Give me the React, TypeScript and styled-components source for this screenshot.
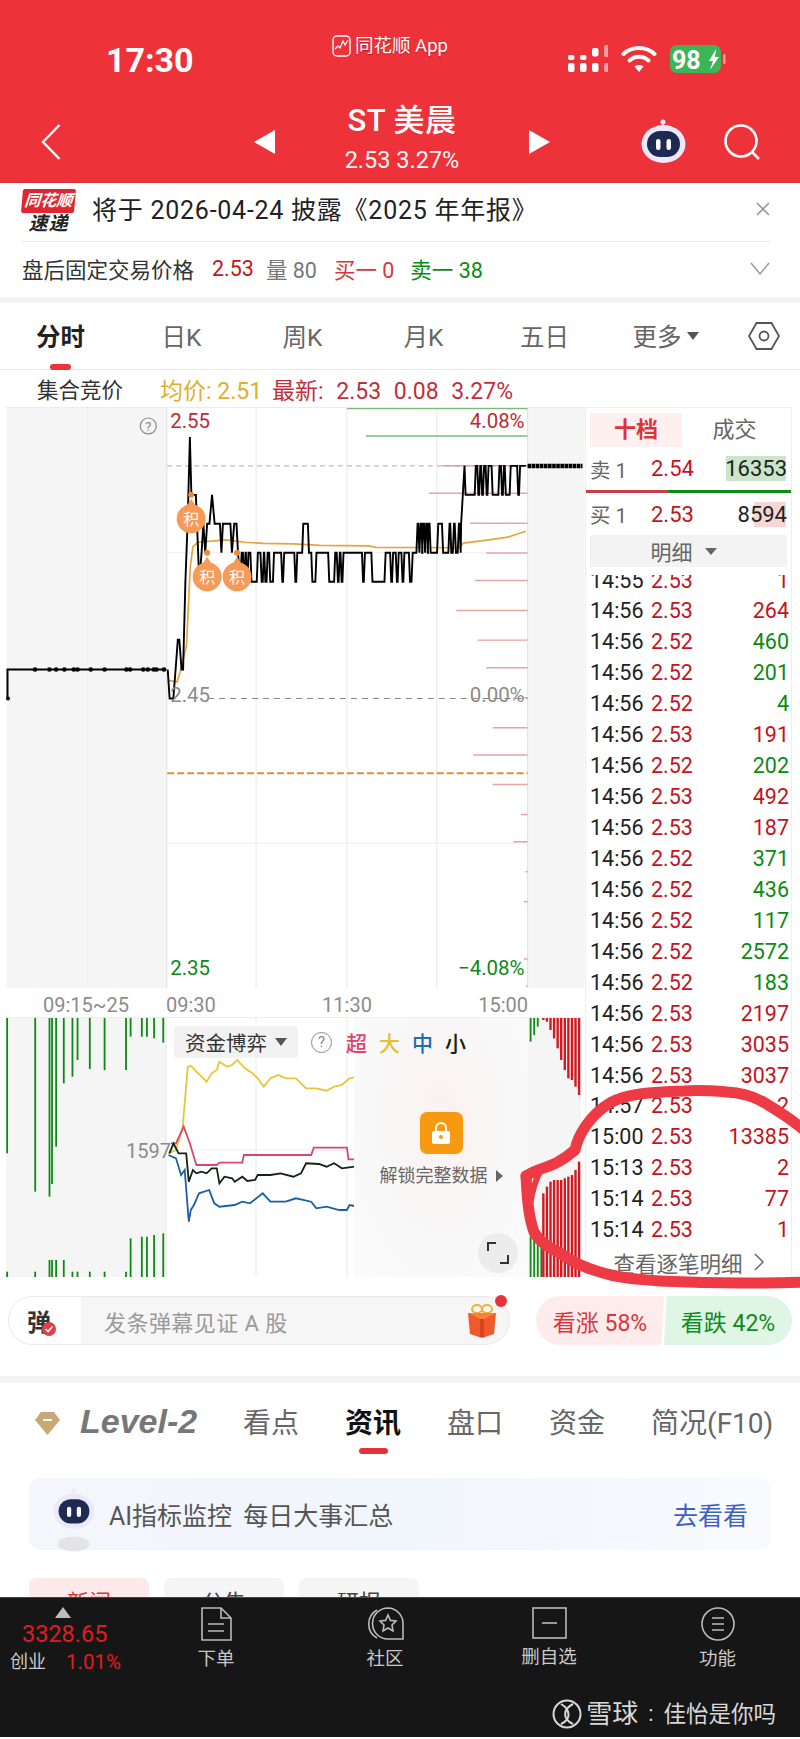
import React from "react";
import styled, { createGlobalStyle } from "styled-components";

const FONT = `Roboto, "Noto Sans CJK SC", sans-serif`;
const RED = "#c3141d";
const GREEN = "#0c8a14";

const Global = createGlobalStyle`
  html, body { margin: 0; padding: 0; background: #fff; }
  body { width: 800px; height: 1739px; overflow: hidden; font-family: ${FONT}; }
  * { box-sizing: border-box; }
`;

const Page = styled.div`
  position: relative; width: 800px; height: 1739px; overflow: hidden;
  display: flex; flex-direction: column; background: #fff;
`;

/* ---------- red header ---------- */
const Header = styled.header`
  height: 183px; background: #ee323a; color: #fff; display: flex; flex-direction: column;
  border-bottom: 1px solid #c9353b;
`;
const StatusBar = styled.div`
  height: 92px; padding: 42px 0 0 106px; display: flex; align-items: flex-start;
`;
const Clock = styled.div`
  font-size: 34px; font-weight: 700; line-height: 36px; width: 226px;
`;
const AppTag = styled.div`
  display: flex; align-items: center; gap: 4px; font-size: 18.5px; line-height: 22px; width: 236px;
  margin-top: -9px; text-shadow: 0 1px 1px rgba(120,0,0,.5);
`;
const StatusIcons = styled.div`
  display: flex; align-items: center; gap: 13px; height: 34px;
`;
const Nav = styled.div`
  flex: 1; display: flex; align-items: center; padding: 0 40px 0 41px; margin-top: 9px;
`;
const BackSlot = styled.div`
  width: 213px; display: flex;
`;
const NavCenter = styled.div`
  width: 296px; display: flex; align-items: center; justify-content: space-between;
`;
const Title = styled.div`
  display: flex; flex-direction: column; align-items: center;
`;
const TitleMain = styled.div`
  font-size: 31px; line-height: 38px; font-weight: 500; margin-top: -8px; letter-spacing: .5px;
`;
const TitleSub = styled.div`
  font-size: 23.5px; line-height: 26px; margin-top: 7px; opacity: .96;
`;
const NavRight = styled.div`
  margin-left: auto; display: flex; align-items: center; gap: 38px;
`;

/* ---------- notice ---------- */
const Notice = styled.section`
  height: 114px; padding: 0 30px 0 22px; display: flex; flex-direction: column;
`;
const NoticeTop = styled.div`
  height: 59px; display: flex; align-items: center; gap: 16px; border-bottom: 1px solid #ececec;
`;
const Brand = styled.div`
  width: 53px; height: 48px; display: flex; flex-direction: column; align-items: center; margin-top: 2px; flex: none;
`;
const BrandRed = styled.div`
  width: 53px; height: 24px; background: #e0272f; color: #fff; font-size: 16px; line-height: 24px; text-align: center;
  font-style: italic; font-weight: 700; transform: skewX(-5deg); white-space: nowrap; border-radius: 2px;
`;
const BrandDark = styled.div`
  font-size: 19px; line-height: 22px; font-style: italic; font-weight: 700; color: #222; letter-spacing: 1px;
`;
const NoticeText = styled.div`
  font-size: 25px; color: #222; flex: 1; white-space: nowrap; letter-spacing: .75px; margin-top: -8px; margin-left: 1px;
`;
const CloseSlot = styled.div`
  display: flex; margin-top: -6px;
`;
const NoticeRow = styled.div`
  flex: 1; display: flex; align-items: center; font-size: 21.5px; padding-bottom: 3px; white-space: nowrap;
`;
const Seg = styled.span<{ $c: string; $ml: number }>`
  color: ${p => p.$c}; margin-left: ${p => p.$ml}px;
`;
const ChevronSlot = styled.div`
  margin-left: auto; display: flex;
`;
const Band = styled.div<{ $h: number }>`
  height: ${p => p.$h}px; background: #f4f4f4; flex: none;
`;

/* ---------- period tabs ---------- */
const PeriodTabs = styled.nav`
  height: 67px; display: flex; align-items: center; border-bottom: 1px solid #e9e9e9; position: relative;
`;
const PeriodTab = styled.div<{ $active?: boolean }>`
  width: 121px; text-align: center; font-size: 24.5px; color: ${p => p.$active ? "#222" : "#666"};
  font-weight: ${p => p.$active ? 700 : 400}; position: relative; display: flex; justify-content: center; align-items: center; gap: 5px;
  height: 100%; padding-bottom: 1px;
  ${p => p.$active ? `&::after { content: ""; position: absolute; left: 50px; width: 21px; bottom: -1px; height: 6px; border-radius: 3px; background: #ee323a; }` : ""}
`;
const MoreCaret = styled.i`
  width: 0; height: 0; border-left: 6px solid transparent; border-right: 6px solid transparent; border-top: 8px solid #555;
`;
const HexSlot = styled.div`
  margin-left: 22px; display: flex;
`;
const InfoRow = styled.div`
  height: 37px; display: flex; align-items: center; padding: 0 0 0 37px; font-size: 23px; white-space: nowrap;
`;
const InfoName = styled.span`
  color: #333; width: 123px; font-size: 21.5px;
`;
const InfoAvg = styled.span`
  color: #dfae2c; width: 112px;
`;
const InfoLast = styled.span`
  color: #c0303a; word-spacing: 7px;
`;

/* ---------- chart zone ---------- */
const ChartZone = styled.section`
  height: 878px; display: flex; padding-left: 6px;
`;
const ChartColumn = styled.div`
  width: 579px; display: flex; flex-direction: column;
`;
const MainSvg = styled.svg`
  display: block; width: 579px; height: 581px; border-top: 1px solid #ececec;
`;
const TimeRow = styled.div`
  height: 30px; display: flex; color: #8b8b8b; font-size: 20px; line-height: 34px; border-bottom: 1px solid #eee;
`;
const TimeAuction = styled.div`
  width: 160px; text-align: center;
`;
const TimeMain = styled.div`
  width: 362px; display: flex; justify-content: space-between;
`;
const SubArea = styled.div`
  position: relative; width: 579px; height: 259px;
`;
const SubSvg = styled.svg`
  display: block; width: 579px; height: 259px;
`;
const SubTools = styled.div`
  position: absolute; left: 168px; top: 8px; display: flex; align-items: center;
`;
const Selector = styled.div`
  width: 124px; height: 32px; background: #f2f2f2; border-radius: 3px; display: flex; align-items: center; justify-content: center; gap: 8px;
  color: #333; font-size: 20.5px; white-space: nowrap;
`;
const LegendItem = styled.span<{ $c: string }>`
  color: ${p => p.$c}; width: 33px; text-align: center; font-size: 21px; font-weight: 500;
`;
const HelpDot = styled.span`
  width: 21px; height: 21px; border: 1.5px solid #8c8c8c; border-radius: 50%; color: #888; font-size: 15px; line-height: 18px; text-align: center;
  margin: 0 8px 0 13px;
`;
const LockPane = styled.div`
  position: absolute; left: 348px; top: 0; width: 174px; height: 259px;
  background: radial-gradient(ellipse at 50% 40%, #fbf1f0 0, #f8f8f8 55%, #fbfbfb 100%);
  display: flex; flex-direction: column; align-items: center; padding-top: 94px;
`;
const LockBox = styled.div`
  width: 43px; height: 42px; border-radius: 7px; background: #f79a12; display: flex; align-items: center; justify-content: center;
`;
const LockText = styled.div`
  margin-top: 10px; font-size: 18px; line-height: 24px; color: #666; display: flex; align-items: center; gap: 8px; white-space: nowrap;
`;
const LockCaret = styled.i`
  width: 0; height: 0; border-top: 6px solid transparent; border-bottom: 6px solid transparent; border-left: 7px solid #666;
`;
const ExpandBtn = styled.div`
  position: absolute; left: 472px; top: 215px; width: 40px; height: 40px; border-radius: 50%; background: #ececec; display: flex; align-items: center; justify-content: center;
`;

/* ---------- right panel ---------- */
const Panel = styled.aside`
  width: 207px; height: 870px; border: 1px solid #eee; border-bottom: none; display: flex; flex-direction: column; overflow: hidden;
`;
const PanelTabs = styled.div`
  display: flex; padding: 5px 4px 0; height: 39px; flex: none;
`;
const PanelTab = styled.div<{ $active?: boolean }>`
  width: ${p => p.$active ? 93 : 106}px; height: 34px; text-align: center; font-size: 22px; line-height: 34px; font-weight: ${p => p.$active ? 700 : 400};
  color: ${p => p.$active ? "#d8353a" : "#666"}; background: ${p => p.$active ? "#fdf0ef" : "transparent"};
`;
const QuoteRow = styled.div<{ $h: number }>`
  height: ${p => p.$h}px; display: flex; align-items: center; padding: 0 4px; font-size: 22px; flex: none;
`;
const QuoteName = styled.span`
  color: #666; width: 61px; white-space: nowrap; font-size: 20.5px;
`;
const QuotePrice = styled.span`
  color: ${RED};
`;
const QuoteVol = styled.span`
  margin-left: auto; position: relative; color: #222; z-index: 0;
`;
const VolBar = styled.i<{ $c: string; $w: number }>`
  position: absolute; right: 1px; top: 0; bottom: 0; width: ${p => p.$w}px; background: ${p => p.$c}; z-index: -1;
`;
const Split = styled.div`
  height: 3px; flex: none; background: linear-gradient(90deg, #c64147 0, #c64147 40%, #0e8a17 40%, #0e8a17 100%);
`;
const DetailHead = styled.div`
  margin: 0 4px; height: 32px; background: #f3f3f3; color: #666; font-size: 21px; display: flex; align-items: center; justify-content: center; gap: 12px; flex: none;
  padding-right: 10px;
`;
const DetailCaret = styled.i`
  width: 0; height: 0; border-left: 6px solid transparent; border-right: 6px solid transparent; border-top: 7px solid #666;
`;
const TradeClip = styled.div`
  margin-top: 8px; height: 668px; overflow: hidden; flex: none;
`;
const TradeList = styled.div`
  margin-top: -10.5px;
`;
const TradeRow = styled.div`
  height: 30.95px; display: grid; grid-template-columns: 61px 60px 1fr; align-items: center; padding: 0 2px 0 4px; font-size: 21.5px; line-height: 31px;
`;
const TradeTime = styled.span`
  color: #222;
`;
const TradeQty = styled.span<{ $up: boolean }>`
  text-align: right; color: ${p => p.$up ? RED : GREEN};
`;
const PanelFoot = styled.div`
  margin-top: 3px; font-size: 21.5px; color: #666; display: flex; align-items: center; justify-content: center; gap: 11px; height: 32px; flex: none; padding: 0 3px;
`;

/* ---------- danmu ---------- */
const DanmuRow = styled.section`
  height: 91px; padding: 11px 8px 0; display: flex; justify-content: space-between; align-items: flex-start; flex: none;
`;
const DanmuBox = styled.div`
  position: relative; width: 502px; height: 49px; border-radius: 25px; border: 1px solid #eaeaea; display: flex; align-items: center; background: #f6f6f6;
`;
const DanmuTag = styled.div`
  width: 72px; height: 47px; background: #fff; border-radius: 24px 0 0 24px; display: flex; align-items: center; padding-left: 18px; font-size: 24px; color: #333; font-weight: 700; position: relative; flex: none;
`;
const Check = styled.svg`
  position: absolute; left: 33px; top: 25px;
`;
const DanmuHint = styled.div`
  margin-left: 23px; font-size: 22px; color: #9a9a9a; flex: 1; letter-spacing: .45px; white-space: nowrap;
`;
const GiftSlot = styled.div`
  margin-right: 12px; display: flex;
`;
const RedDot = styled.i`
  position: absolute; right: 2px; top: -2px; width: 12px; height: 12px; border-radius: 50%; background: #e8323a;
`;
const Sentiment = styled.div`
  width: 256px; height: 49px; display: flex; font-size: 23px; white-space: nowrap;
`;
const SentUp = styled.div`
  flex: 1; background: #fdeceb; color: #d8373d; border-radius: 25px 0 0 25px; display: flex; align-items: center; justify-content: center;
  clip-path: polygon(0 0, 100% 0, 98% 100%, 0 100%);
`;
const SentDown = styled.div`
  flex: 1; background: #dff6e4; color: #0e8a24; border-radius: 0 25px 25px 0; display: flex; align-items: center; justify-content: center;
  clip-path: polygon(2% 0, 100% 0, 100% 100%, 0 100%);
`;

/* ---------- info tabs ---------- */
const InfoZone = styled.section`
  flex: 1; min-height: 0; overflow: hidden; padding: 0 29px;
`;
const InfoTabs = styled.div`
  height: 72px; padding: 4px 0 0 6px; display: flex; align-items: center;
`;
const LevelMark = styled.div`
  display: flex; align-items: center; gap: 20px; width: 208px; flex: none;
`;
const LevelText = styled.span`
  font-size: 34px; font-weight: 700; font-style: italic; color: #777; font-family: "Liberation Sans", sans-serif;
`;
const DiamondSlot = styled.div`
  display: flex; margin-top: 4px;
`;
const InfoTabItem = styled.div<{ $active?: boolean }>`
  position: relative; font-size: 28px; margin-right: 46px; white-space: nowrap; flex: none;
  color: ${p => p.$active ? "#111" : "#666"}; font-weight: ${p => p.$active ? 700 : 400};
  ${p => p.$active ? `&::after { content: ""; position: absolute; left: 14px; width: 29px; top: 47px; height: 6px; border-radius: 3px; background: #e8323a; }` : ""}
`;
const AiBanner = styled.div`
  margin-top: 23px; height: 72px; border-radius: 12px; background: linear-gradient(90deg, #f6f5fc 0, #f1f5fc 50%, #f8fafe 100%);
  display: flex; align-items: center; padding: 0 23px 0 24px; font-size: 25px; color: #555;
`;
const RobotSlot = styled.div`
  display: flex; margin-top: 16px;
`;
const AiText = styled.span`
  margin-left: 14px; word-spacing: 5px; white-space: nowrap;
`;
const AiLink = styled.span`
  margin-left: auto; color: #3f62bd;
`;
const Pills = styled.div`
  margin-top: 28px; display: flex; gap: 15px;
`;
const Pill = styled.div<{ $active?: boolean }>`
  width: 120px; height: 50px; border-radius: 7px; text-align: center; font-size: 22px; line-height: 50px;
  background: ${p => p.$active ? "#fde9e9" : "#f5f5f5"}; color: ${p => p.$active ? "#d8373d" : "#444"};
`;

/* ---------- dark bar ---------- */
const Dock = styled.footer`
  height: 140px; background: #161616; flex: none; margin-bottom: 2px; border-top: 1px solid #444; position: relative;
  display: grid; grid-template-columns: 133px 166px 172px 156px 181px; align-content: start; color: #c9c9c9;
`;
const IndexCell = styled.div`
  padding: 9px 0 0 10px; display: flex; flex-direction: column; align-items: flex-start;
`;
const IndexCaret = styled.i`
  width: 0; height: 0; margin-left: 45px; border-left: 8px solid transparent; border-right: 8px solid transparent; border-bottom: 11px solid #bdbdbd;
`;
const IndexValue = styled.div`
  color: #e21b22; font-size: 23.5px; line-height: 30px; margin: 1px 0 0 12px;
`;
const IndexLine = styled.div`
  display: flex; line-height: 26px; font-size: 18px; gap: 20px;
`;
const IndexPct = styled.span`
  color: #e21b22; font-size: 20.5px;
`;
const DockItem = styled.div`
  display: flex; flex-direction: column; align-items: center; padding-top: 9px; font-size: 18.5px; line-height: 24px; gap: 6px;
`;
const Watermark = styled.div`
  position: absolute; right: 24px; top: 101px; display: flex; align-items: center; color: #d8d8d8; gap: 4px; font-size: 26px; line-height: 30px; white-space: nowrap;
`;
const WmColon = styled.span`
  font-size: 22px; margin: 0 6px;
`;
const WmAuthor = styled.span`
  font-size: 22.5px;
`;
const Scribble = styled.svg`
  position: absolute; left: 0; top: 0; pointer-events: none;
`;

/* ---------- drawings ---------- */
const Robot = ({ s = 45, shadow = false }: { s?: number; shadow?: boolean }) => (
  <svg width={s} height={s * (shadow ? 1.6 : 0.98)} viewBox={shadow ? "0 0 45 72" : "0 0 45 44"}>
    {shadow && <ellipse cx="22" cy="60" rx="17" ry="8" fill="#ddd" opacity=".7" />}
    <circle cx="22" cy="3" r="2.5" fill="#f0e8ff" />
    <path d="M22 5 v4" stroke="#f0e8ff" strokeWidth="2" />
    <ellipse cx="22.5" cy="25" rx="22" ry="19" fill="#ece8fb" />
    <rect x="6" y="12" width="33" height="26" rx="13" fill="#1d2a52" />
    <rect x="15" y="20" width="4.5" height="11" rx="2.2" fill="#fff" />
    <rect x="25.5" y="20" width="4.5" height="11" rx="2.2" fill="#fff" />
  </svg>
);

const Signal = () => (
  <svg width="40" height="28" viewBox="0 0 40 28">
    {[[0,10],[12,10],[24,3],[36,0]].map(([x, y], i) => (
      <React.Fragment key={x}>
        <rect x={x} y={y} width="6.5" height={10 - (i === 3 ? -2 : y / 2)} rx="2" fill={i === 3 ? "#f79aa0" : "#fff"} />
        <rect x={x} y="18" width="6.5" height="9" rx="2" fill={i === 3 ? "#f79aa0" : "#fff"} />
      </React.Fragment>
    ))}
  </svg>
);
const Wifi = () => (
  <svg width="36" height="28" viewBox="0 0 36 28" fill="none" stroke="#fff" strokeWidth="4" strokeLinecap="round">
    <path d="M2.5 9 C11 1 25 1 33.5 9" />
    <path d="M8.5 15.5 C14 10.5 22 10.5 27.5 15.5" />
    <path d="M18 27 L13.5 21.5 C16 19.5 20 19.5 22.5 21.5 Z" fill="#fff" stroke="none" />
  </svg>
);
const Battery = () => (
  <svg width="56" height="28" viewBox="0 0 56 28">
    <rect x="0" y="0" width="51" height="28" rx="7" fill="#3cb558" />
    <rect x="53" y="9" width="2.5" height="10" rx="1.2" fill="#f79aa0" />
    <text x="2" y="23.5" fontSize="25" fontWeight="700" fill="#fff" fontFamily="Roboto, sans-serif">98</text>
    <path d="M46 4 L39 16 H43 L40 25 L49 12 H45 Z" fill="#fff" />
  </svg>
);

const L = [436, 465, 494, 523, 552, 581, 610, 639, 669, 698];
const X = (z: number) => z / 2.657;
const Y = (z: number) => 400 + z / 2.53;
type R = [number, number, number?];
const trace = (base: number, alt: number, ranges: R[]) => {
  const out: [number, number][] = [];
  ranges.forEach(([a, b, o]) => {
    out.push([a - 3, L[base]], [a, L[o ?? alt]], [b, L[o ?? alt]], [b + 3, L[base]]);
  });
  return out;
};
const headPts: [number, number][] = (
  [[445,8],[450,9],[460,9],[466,8],[472,7],[476,7],[482,8],[486,8],[492,5],[498,3],[504,0],[508,2],[520,2],[529,5],[535,4],[540,3],[545,4],[550,3],[556,3],[563,2],[570,3],[584,3],[588,4],[592,3],[612,3],[616,4],[622,3],[628,3],[632,4],[638,5],[642,4]] as [number, number][]
).map(([x, l]) => [x, L[l]]);
const pricePts: [number, number][] = [
  ...headPts,
  ...trace(4, 5, [[648,649],[656,657],[668,682],[695,698],[705,708],[718,725],[750,752],[785,787],[806,818,3],[830,838],[875,888],[898,900],[908,910],[965,967],[990,1022],[1040,1042],[1055,1057],[1070,1072],[1090,1094]]),
  ...trace(4, 3, [[1110,1112],[1118,1120],[1125,1127],[1133,1135],[1140,1142],[1165,1175],[1195,1197],[1207,1209],[1220,1222]]),
  [1226, L[3]],
  ...trace(1, 2, [[1238,1262],[1272,1274],[1282,1284],[1294,1296],[1310,1325],[1335,1337],[1345,1355],[1378,1380]]),
  [1398, L[1]],
];
const priceLine = pricePts.map(([x, y]) => `${X(x).toFixed(1)},${y}`).join(" ");
const zPoly = (a: number[][]) => a.map(([x, y]) => `${X(x).toFixed(1)},${Y(y).toFixed(1)}`).join(" ");
const avgLine = zPoly([[445,708],[470,712],[480,680],[495,620],[505,420],[512,370],[525,358],[560,355],[600,352],[650,358],[700,361],[780,362],[850,366],[980,367],[1000,371],[1220,372],[1232,360],[1300,352],[1350,345],[1398,330]]);
const sellBars = [[164,1175],[234,1140],[310,1250],[385,1293],[455,1263],[531,1213],[606,1270],[676,1293],[752,1390],[828,1310],[897,1258],[972,1310],[1048,1385],[1117,1365],[1193,1397],[1269,1393],[1414,1393],[1483,1398]];
const autoDots = [92,130,148,170,195,205,240,277,335,345,380,392,408,415,435];
const badges = [[191, 518, 494], [207, 576, 552], [237, 576, 552]];

const MainChart = () => (
  <MainSvg viewBox="6 407 579 581">
    <rect x="6" y="407" width="160" height="581" fill="#f5f5f5" />
    <rect x="528" y="407" width="57" height="581" fill="#f5f5f5" />
    {[87, 256, 347, 437].map(x => <line key={x} x1={x} x2={x} y1="407" y2="988" stroke={x === 87 ? "#f0f0f0" : "#e8e8e8"} strokeWidth="1" />)}
    <line x1="166.5" x2="166.5" y1="407" y2="988" stroke="#ddd" />
    <line x1="528" x2="528" y1="407" y2="988" stroke="#e2e2e2" />
    {[552, 843].map(y => <line key={y} x1="166" x2="528" y1={y} y2={y} stroke="#eee" />)}
    <line x1="347" x2="528" y1="407.5" y2="407.5" stroke="#7cbb7c" strokeWidth="1.5" />
    <line x1="366" x2="528" y1="435" y2="435" stroke="#7cbb7c" strokeWidth="1.5" />
    {sellBars.map(([y, x]) => <line key={y} x1={X(x)} x2="528" y1={Y(y)} y2={Y(y)} stroke="#e7a3a5" strokeWidth="1.5" />)}
    <line x1="167" x2="528" y1="465" y2="465" stroke="#bfa39a" strokeDasharray="5 4" />
    <line x1="208" x2="528" y1="698" y2="698" stroke="#888" strokeWidth="1.2" strokeDasharray="6 5" />
    <line x1="167" x2="528" y1="773" y2="773" stroke="#e08e36" strokeWidth="2" strokeDasharray="7 3" />
    <polyline points={avgLine} fill="none" stroke="#e7a43c" strokeWidth="1.7" />
    <polyline points={priceLine} fill="none" stroke="#000" strokeWidth="1.9" strokeLinejoin="miter" />
    <polyline points="7,698 7,669 166,669" fill="none" stroke="#000" strokeWidth="2" />
    <circle cx="7.5" cy="698" r="2" fill="#000" />
    {autoDots.map(z => <circle key={z} cx={X(z)} cy="669" r="2.3" fill="#000" />)}
    <line x1="528" x2="583" y1="465" y2="465" stroke="#000" strokeWidth="4.5" strokeDasharray="3.6 0.5" />
    <g fontFamily={FONT} fontSize="20.5">
      <text x="170" y="427" fill="#bf2a33">2.55</text>
      <text x="525" y="427" fill="#bf2a33" textAnchor="end">4.08%</text>
      <text x="170" y="702" fill="#8b8b8b">2.45</text>
      <text x="525" y="702" fill="#8b8b8b" textAnchor="end">0.00%</text>
      <text x="170" y="975" fill={GREEN}>2.35</text>
      <text x="525" y="975" fill={GREEN} textAnchor="end">−4.08%</text>
    </g>
    <circle cx="148" cy="425" r="8" fill="none" stroke="#888" strokeWidth="1.2" />
    <text x="148" y="430" fontSize="13" fill="#888" textAnchor="middle" fontFamily={FONT}>?</text>
    {badges.map(([x, y, d]) => (
      <g key={x}>
        <circle cx={x} cy={d} r="3" fill="#f0892f" />
        <path d={`M${x} ${d + 4} L${x - 5} ${y - 12} H${x + 5} Z`} fill="#f59a57" />
        <circle cx={x} cy={y} r="14.5" fill="#f59a57" />
        <text x={x} y={y + 6} fontSize="16" fill="#fff" opacity=".95" textAnchor="middle" fontFamily={FONT}>积</text>
      </g>
    ))}
  </MainSvg>
);

const SX = (z: number) => z / 1.96;
const SY = (z: number) => 980 + z / 3;
const sPoly = (a: number[][]) => a.map(([x, y]) => `${SX(x).toFixed(1)},${SY(y).toFixed(1)}`).join(" ");
const greenTop = [[14,520],[69,635],[97,650],[102,612],[110,500],[125,310],[142,290],[152,240],[176,267],[205,270],[247,270],[256,170],[278,170],[288,170],[302,175],[320,188]];
const greenBottom = [[14,875],[69,875],[97,840],[102,840],[110,840],[125,840],[142,875],[152,875],[176,875],[205,875],[247,875],[256,775],[278,770],[288,770],[302,765],[320,760]];
const rightTop = [[1065,120],[1072,125],[1079,150],[1086,175],[1093,205],[1100,240],[1107,270],[1114,295],[1121,300],[1128,320],[1135,345]];
const rightBottom = [[1065,640],[1072,620],[1079,605],[1086,600],[1093,600],[1100,600],[1107,595],[1114,590],[1121,585],[1128,570],[1135,545]];

const SubChart = () => (
  <SubSvg viewBox="6 1018 579 259">
    <rect x="6" y="1018" width="160" height="259" fill="#f5f5f5" />
    <rect x="528" y="1018" width="53" height="259" fill="#f5f5f5" />
    {[256, 347, 437, 166].map(x => <line key={x} x1={x} x2={x} y1="1018" y2="1277" stroke="#e8e8e8" />)}
    <line x1="166" x2="528" y1="1150" y2="1150" stroke="#eee" />
    <g stroke="#0c8a14" strokeWidth="1.8">
      {greenTop.map(([x, y]) => <line key={x} x1={SX(x)} x2={SX(x)} y1="1018" y2={SY(y)} />)}
      {greenBottom.map(([x, y]) => <line key={x} x1={SX(x)} x2={SX(x)} y1="1277" y2={SY(y)} />)}
      <line x1={SX(1040)} x2={SX(1040)} y1="1018" y2={SY(185)} />
      <line x1={SX(1047)} x2={SX(1047)} y1="1018" y2={SY(165)} />
      <line x1={SX(1054)} x2={SX(1054)} y1="1018" y2={SY(140)} />
      {[1040, 1047, 1054, 1061].map(x => <line key={x} x1={SX(x)} x2={SX(x)} y1="1277" y2={SY(770)} />)}
    </g>
    <g stroke="#d01a22" strokeWidth="2.4">
      {rightTop.map(([x, y]) => <line key={x} x1={SX(x)} x2={SX(x)} y1="1018" y2={SY(y)} />)}
      {rightBottom.map(([x, y]) => <line key={x} x1={SX(x)} x2={SX(x)} y1="1277" y2={SY(y)} />)}
    </g>
    <g fill="none" strokeWidth="1.8">
      <polyline stroke="#e5c63a" points={sPoly([[330,520],[345,510],[358,440],[368,260],[375,258],[385,275],[395,290],[405,305],[415,280],[425,270],[430,245],[445,260],[455,255],[465,240],[480,265],[495,280],[505,295],[517,320],[530,295],[545,285],[560,295],[580,295],[600,325],[620,325],[640,332],[655,320],[670,315],[685,295],[695,292]])} />
      <polyline stroke="#d8486a" points={sPoly([[335,490],[345,490],[360,440],[372,490],[385,555],[425,555],[430,548],[475,548],[478,525],[610,525],[615,503],[680,503],[683,538],[695,538]])} />
      <polyline stroke="#1a5ea8" points={sPoly([[330,525],[345,535],[355,585],[362,570],[370,725],[374,690],[380,675],[390,640],[410,630],[420,670],[430,680],[460,675],[475,665],[490,670],[515,640],[530,665],[560,665],[580,655],[610,665],[620,685],[640,680],[665,690],[680,690],[685,675],[695,678]])} />
      <polyline stroke="#10240f" points={sPoly([[332,520],[340,490],[350,520],[365,520],[370,605],[378,570],[385,580],[395,575],[405,580],[415,565],[425,565],[430,610],[440,590],[455,595],[460,605],[475,590],[485,603],[500,600],[505,585],[530,585],[550,580],[575,590],[590,580],[600,550],[625,552],[640,560],[655,550],[670,565],[695,560]])} />
    </g>
    <text x="126" y="1158" fontSize="20" fill="#8b8b8b" fontFamily={FONT}>1597</text>
  </SubSvg>
);

type T = [string, string, string, boolean];
const trades: T[] = [
  ["14:55","2.53","1",true],["14:56","2.53","264",true],["14:56","2.52","460",false],["14:56","2.52","201",false],
  ["14:56","2.52","4",false],["14:56","2.53","191",true],["14:56","2.52","202",false],["14:56","2.53","492",true],
  ["14:56","2.53","187",true],["14:56","2.52","371",false],["14:56","2.52","436",false],["14:56","2.52","117",false],
  ["14:56","2.52","2572",false],["14:56","2.52","183",false],["14:56","2.53","2197",true],["14:56","2.53","3035",true],
  ["14:56","2.53","3037",true],["14:57","2.53","2",true],["15:00","2.53","13385",true],["15:13","2.53","2",true],
  ["15:14","2.53","77",true],["15:14","2.53","1",true],
];

export default function App() {
  return (
    <Page>
      <Global />
      <Header>
        <StatusBar>
          <Clock>17:30</Clock>
          <AppTag>
            <svg width="19" height="26" viewBox="0 0 19 26">
              <rect x="1" y="3" width="17" height="20" rx="4" fill="none" stroke="#fff" strokeWidth="1.4" />
              <path d="M3 16 L6 13 L8 15 L11 8 L13 12 L16 7" stroke="#fff" strokeWidth="1.2" fill="none" />
            </svg>
            同花顺 App
          </AppTag>
          <StatusIcons>
            <Signal />
            <Wifi />
            <Battery />
          </StatusIcons>
        </StatusBar>
        <Nav>
          <BackSlot>
            <svg width="20" height="36" viewBox="0 0 20 36" fill="none" stroke="#fff" strokeWidth="2.4"><path d="M18.5 1 L2 18 L18.5 35" /></svg>
          </BackSlot>
          <NavCenter>
            <svg width="22" height="24" viewBox="0 0 22 24"><path d="M21 0 V24 L0 12 Z" fill="#fff" /></svg>
            <Title>
              <TitleMain>ST 美晨</TitleMain>
              <TitleSub>2.53 3.27%</TitleSub>
            </Title>
            <svg width="22" height="24" viewBox="0 0 22 24"><path d="M1 0 V24 L22 12 Z" fill="#fff" /></svg>
          </NavCenter>
          <NavRight>
            <Robot />
            <svg width="36" height="36" viewBox="0 0 36 36" fill="none" stroke="#fff" strokeWidth="2.6"><circle cx="17" cy="17" r="15.5" /><path d="M28 28 L35 35" /></svg>
          </NavRight>
        </Nav>
      </Header>

      <Notice>
        <NoticeTop>
          <Brand>
            <BrandRed>同花顺</BrandRed>
            <BrandDark>速递</BrandDark>
          </Brand>
          <NoticeText>将于 2026-04-24 披露《2025 年年报》</NoticeText>
          <CloseSlot>
            <svg width="14" height="14" viewBox="0 0 14 14" stroke="#999" strokeWidth="1.6"><path d="M1 1 L13 13 M13 1 L1 13" /></svg>
          </CloseSlot>
        </NoticeTop>
        <NoticeRow>
          <Seg $c="#333" $ml={0}>盘后固定交易价格</Seg>
          <Seg $c={RED} $ml={18}>2.53</Seg>
          <Seg $c="#777" $ml={12}>量 80</Seg>
          <Seg $c="#d8373d" $ml={17}>买一 0</Seg>
          <Seg $c={GREEN} $ml={16}>卖一 38</Seg>
          <ChevronSlot>
            <svg width="20" height="13" viewBox="0 0 20 13" fill="none" stroke="#999" strokeWidth="1.4"><path d="M1 1 L10 12 L19 1" /></svg>
          </ChevronSlot>
        </NoticeRow>
      </Notice>
      <Band $h={6} />

      <PeriodTabs>
        <PeriodTab $active>分时</PeriodTab>
        <PeriodTab>日K</PeriodTab>
        <PeriodTab>周K</PeriodTab>
        <PeriodTab>月K</PeriodTab>
        <PeriodTab>五日</PeriodTab>
        <PeriodTab>更多<MoreCaret /></PeriodTab>
        <HexSlot>
          <svg width="32" height="28" viewBox="0 0 32 28" fill="none" stroke="#555" strokeWidth="1.8"><path d="M8.5 1 H23.5 L31 14 L23.5 27 H8.5 L1 14 Z" /><circle cx="16" cy="14" r="4.5" /></svg>
        </HexSlot>
      </PeriodTabs>
      <InfoRow>
        <InfoName>集合竞价</InfoName>
        <InfoAvg>均价: 2.51</InfoAvg>
        <InfoLast>最新: 2.53 0.08 3.27%</InfoLast>
      </InfoRow>

      <ChartZone>
        <ChartColumn>
          <MainChart />
          <TimeRow>
            <TimeAuction>09:15~25</TimeAuction>
            <TimeMain><span>09:30</span><span>11:30</span><span>15:00</span></TimeMain>
          </TimeRow>
          <SubArea>
            <SubChart />
            <LockPane>
              <LockBox>
                <svg width="20" height="24" viewBox="0 0 20 24"><path d="M5 11 V7 a5 5 0 0 1 10 0 V11" fill="none" stroke="#fff" strokeWidth="2" /><rect x="1" y="10" width="18" height="13" rx="2" fill="#fff" /><circle cx="10" cy="16" r="2" fill="#f79a12" /></svg>
              </LockBox>
              <LockText>解锁完整数据<LockCaret /></LockText>
            </LockPane>
            <SubTools>
              <Selector>资金博弈<MoreCaret /></Selector>
              <HelpDot>?</HelpDot>
              <LegendItem $c="#e0436f">超</LegendItem>
              <LegendItem $c="#e5c02f">大</LegendItem>
              <LegendItem $c="#1f6bb5">中</LegendItem>
              <LegendItem $c="#10240f">小</LegendItem>
            </SubTools>
            <ExpandBtn>
              <svg width="22" height="22" viewBox="0 0 22 22" fill="none" stroke="#333" strokeWidth="2"><path d="M1 9 V1 H9 M21 13 V21 H13" /></svg>
            </ExpandBtn>
          </SubArea>
        </ChartColumn>
        <Panel>
          <PanelTabs>
            <PanelTab $active>十档</PanelTab>
            <PanelTab>成交</PanelTab>
          </PanelTabs>
          <QuoteRow $h={43}>
            <QuoteName>卖 1</QuoteName>
            <QuotePrice>2.54</QuotePrice>
            <QuoteVol><VolBar $c="#c9e6cb" $w={60} />16353</QuoteVol>
          </QuoteRow>
          <Split />
          <QuoteRow $h={42}>
            <QuoteName>买 1</QuoteName>
            <QuotePrice>2.53</QuotePrice>
            <QuoteVol><VolBar $c="#f7d6d6" $w={32} />8594</QuoteVol>
          </QuoteRow>
          <DetailHead>明细<DetailCaret /></DetailHead>
          <TradeClip>
            <TradeList>
              {trades.map((t, i) => (
                <TradeRow key={i}>
                  <TradeTime>{t[0]}</TradeTime>
                  <QuotePrice>{t[1]}</QuotePrice>
                  <TradeQty $up={t[3]}>{t[2]}</TradeQty>
                </TradeRow>
              ))}
            </TradeList>
          </TradeClip>
          <PanelFoot>
            查看逐笔明细
            <svg width="10" height="18" viewBox="0 0 10 18" fill="none" stroke="#666" strokeWidth="1.5"><path d="M1 1 L9 9 L1 17" /></svg>
          </PanelFoot>
        </Panel>
      </ChartZone>

      <DanmuRow>
        <DanmuBox>
          <DanmuTag>
            弹
            <Check width="14" height="14" viewBox="0 0 14 14"><circle cx="7" cy="7" r="7" fill="#e0404a" /><path d="M3.5 7 L6 9.5 L10.5 4.5" stroke="#fff" strokeWidth="1.6" fill="none" /></Check>
          </DanmuTag>
          <DanmuHint>发条弹幕见证 A 股</DanmuHint>
          <GiftSlot>
            <svg width="30" height="34" viewBox="0 0 30 34">
              <ellipse cx="10" cy="5" rx="5" ry="4" fill="none" stroke="#f0b030" strokeWidth="2" />
              <ellipse cx="20" cy="5" rx="5" ry="4" fill="none" stroke="#f0b030" strokeWidth="2" />
              <path d="M1 9 H29 L27 30 L15 34 L3 30 Z" fill="#ee5a2c" />
              <path d="M1 9 L15 16 L29 9" fill="#f9803f" />
              <path d="M13 15 H17 V33 H13 Z" fill="#d9401e" />
            </svg>
          </GiftSlot>
          <RedDot />
        </DanmuBox>
        <Sentiment>
          <SentUp>看涨 58%</SentUp>
          <SentDown>看跌 42%</SentDown>
        </Sentiment>
      </DanmuRow>
      <Band $h={7} />

      <InfoZone>
        <InfoTabs>
          <LevelMark>
            <DiamondSlot>
              <svg width="25" height="23" viewBox="0 0 25 23"><path d="M6 0 H19 L25 8 L12.5 23 L0 8 Z" fill="#c9a777" /><rect x="8" y="7" width="9" height="2" fill="#fff" /></svg>
            </DiamondSlot>
            <LevelText>Level-2</LevelText>
          </LevelMark>
          <InfoTabItem>看点</InfoTabItem>
          <InfoTabItem $active>资讯</InfoTabItem>
          <InfoTabItem>盘口</InfoTabItem>
          <InfoTabItem>资金</InfoTabItem>
          <InfoTabItem>简况(F10)</InfoTabItem>
        </InfoTabs>
        <AiBanner>
          <RobotSlot><Robot s={42} shadow /></RobotSlot>
          <AiText>AI指标监控 每日大事汇总</AiText>
          <AiLink>去看看</AiLink>
        </AiBanner>
        <Pills>
          <Pill $active>新闻</Pill>
          <Pill>公告</Pill>
          <Pill>研报</Pill>
        </Pills>
      </InfoZone>

      <Dock>
        <IndexCell>
          <IndexCaret />
          <IndexValue>3328.65</IndexValue>
          <IndexLine>创业<IndexPct>1.01%</IndexPct></IndexLine>
        </IndexCell>
        <DockItem>
          <svg width="32" height="34" viewBox="0 0 32 34" fill="none" stroke="#bbb" strokeWidth="1.6"><path d="M2 1 H21 L31 11 V33 H2 Z M21 1 V11 H31" /><path d="M8 17 H24 M8 24 H24" /></svg>
          下单
        </DockItem>
        <DockItem>
          <svg width="38" height="34" viewBox="0 0 38 34" fill="none" stroke="#bbb" strokeWidth="1.6"><path d="M11 3 A16 16 0 0 0 11 31" /><path d="M22 1 A15.5 15.5 0 0 1 37 16 V32 H22 A15.5 15.5 0 0 1 22 1 Z" /><path d="M22 8 L24.4 13.4 L30 14 L26 18 L27 24 L22 21 L17 24 L18 18 L14 14 L19.6 13.4 Z" /></svg>
          社区
        </DockItem>
        <DockItem>
          <svg width="35" height="32" viewBox="0 0 35 32" fill="none" stroke="#bbb" strokeWidth="1.6"><rect x="1" y="1" width="33" height="30" /><path d="M10 16 H25" /></svg>
          删自选
        </DockItem>
        <DockItem>
          <svg width="34" height="34" viewBox="0 0 34 34" fill="none" stroke="#bbb" strokeWidth="1.6"><circle cx="17" cy="17" r="16" /><path d="M11 11 H23 M11 17 H23 M11 23 H23" /></svg>
          功能
        </DockItem>
        <Watermark>
          <svg width="30" height="30" viewBox="0 0 30 30" fill="none" stroke="#d8d8d8" strokeWidth="2"><circle cx="15" cy="15" r="13.5" /><path d="M9 5 C18 10 20 20 9 25 M21 5 C11 10 10 20 21 25" /></svg>
          雪球<WmColon>:</WmColon><WmAuthor>佳怡是你吗</WmAuthor>
        </Watermark>
      </Dock>

      <Scribble width="800" height="1739" viewBox="0 0 800 1739" fill="none" stroke="#ee3a44" strokeWidth="11" strokeLinecap="round" strokeLinejoin="round">
        <path d="M526 1176 C540 1166 552 1170 575 1150 C578 1135 590 1115 610 1103 C625 1094 650 1092 684 1091 C700 1090 715 1091 727 1092 C745 1093 755 1097 765 1103 C780 1112 790 1118 804 1130" />
        <path d="M526 1176 C527 1195 528 1215 534 1232 C540 1243 550 1248 560 1253 C572 1262 585 1268 600 1272 C615 1277 630 1279 660 1281 C700 1283 750 1284 804 1282" />
        <path d="M541 1170 C535 1180 532 1192 530 1205" strokeWidth="6" />
      </Scribble>
    </Page>
  );
}
